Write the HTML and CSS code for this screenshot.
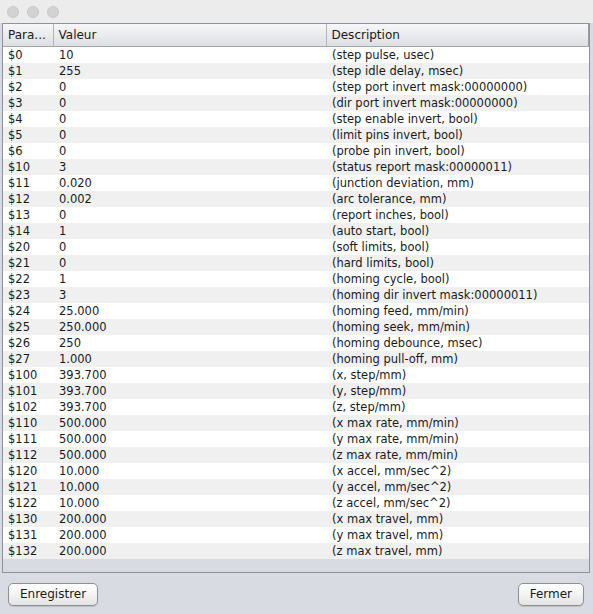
FILE: index.html
```html
<!DOCTYPE html>
<html lang="fr">
<head>
<meta charset="utf-8">
<title>Paramètres</title>
<link rel="stylesheet" href="styles.css">
</head>
<body>
<div class="window">
  <div class="titlebar">
    <span class="light"></span><span class="light"></span><span class="light"></span>
  </div>
  <div class="main">
    <div class="table-box">
      <table class="grid">
        <colgroup><col class="c1"><col class="c2"><col class="c3"></colgroup>
        <thead>
          <tr><th>Para...</th><th>Valeur</th><th>Description</th></tr>
        </thead>
        <tbody>
          <tr><td>$0</td><td>10</td><td>(step pulse, usec)</td></tr>
          <tr><td>$1</td><td>255</td><td>(step idle delay, msec)</td></tr>
          <tr><td>$2</td><td>0</td><td>(step port invert mask:00000000)</td></tr>
          <tr><td>$3</td><td>0</td><td>(dir port invert mask:00000000)</td></tr>
          <tr><td>$4</td><td>0</td><td>(step enable invert, bool)</td></tr>
          <tr><td>$5</td><td>0</td><td>(limit pins invert, bool)</td></tr>
          <tr><td>$6</td><td>0</td><td>(probe pin invert, bool)</td></tr>
          <tr><td>$10</td><td>3</td><td>(status report mask:00000011)</td></tr>
          <tr><td>$11</td><td>0.020</td><td>(junction deviation, mm)</td></tr>
          <tr><td>$12</td><td>0.002</td><td>(arc tolerance, mm)</td></tr>
          <tr><td>$13</td><td>0</td><td>(report inches, bool)</td></tr>
          <tr><td>$14</td><td>1</td><td>(auto start, bool)</td></tr>
          <tr><td>$20</td><td>0</td><td>(soft limits, bool)</td></tr>
          <tr><td>$21</td><td>0</td><td>(hard limits, bool)</td></tr>
          <tr><td>$22</td><td>1</td><td>(homing cycle, bool)</td></tr>
          <tr><td>$23</td><td>3</td><td>(homing dir invert mask:00000011)</td></tr>
          <tr><td>$24</td><td>25.000</td><td>(homing feed, mm/min)</td></tr>
          <tr><td>$25</td><td>250.000</td><td>(homing seek, mm/min)</td></tr>
          <tr><td>$26</td><td>250</td><td>(homing debounce, msec)</td></tr>
          <tr><td>$27</td><td>1.000</td><td>(homing pull-off, mm)</td></tr>
          <tr><td>$100</td><td>393.700</td><td>(x, step/mm)</td></tr>
          <tr><td>$101</td><td>393.700</td><td>(y, step/mm)</td></tr>
          <tr><td>$102</td><td>393.700</td><td>(z, step/mm)</td></tr>
          <tr><td>$110</td><td>500.000</td><td>(x max rate, mm/min)</td></tr>
          <tr><td>$111</td><td>500.000</td><td>(y max rate, mm/min)</td></tr>
          <tr><td>$112</td><td>500.000</td><td>(z max rate, mm/min)</td></tr>
          <tr><td>$120</td><td>10.000</td><td>(x accel, mm/sec^2)</td></tr>
          <tr><td>$121</td><td>10.000</td><td>(y accel, mm/sec^2)</td></tr>
          <tr><td>$122</td><td>10.000</td><td>(z accel, mm/sec^2)</td></tr>
          <tr><td>$130</td><td>200.000</td><td>(x max travel, mm)</td></tr>
          <tr><td>$131</td><td>200.000</td><td>(y max travel, mm)</td></tr>
          <tr><td>$132</td><td>200.000</td><td>(z max travel, mm)</td></tr>
        </tbody>
      </table>
    </div>
    <div class="actions">
      <button class="btn" type="button">Enregistrer</button>
      <button class="btn" type="button">Fermer</button>
    </div>
  </div>
</div>
</body>
</html>
```

FILE: styles.css
```css
* { box-sizing: border-box; }

html, body {
  margin: 0;
  padding: 0;
  width: 593px;
  height: 614px;
  overflow: hidden;
  background: #d8dbe1;
  font-family: "DejaVu Sans", Verdana, sans-serif;
  font-size: 11.5px;
  color: #1a1a1a;
}

.window {
  display: flex;
  flex-direction: column;
  height: 614px;
}

.titlebar {
  height: 23px;
  flex: none;
  background: #ececec;
  display: flex;
  align-items: center;
  gap: 8px;
  padding: 1px 0 0 7px;
}

.light {
  width: 12px;
  height: 12px;
  border-radius: 50%;
  background: #d3d3d3;
  border: 1px solid #c8c8c8;
}

.main {
  flex: 1;
  display: flex;
  flex-direction: column;
  padding: 0 3px 0 2px;
}

.table-box {
  height: 550px;
  border: 1px solid #8f9298;
  background: #d8dbe1;
  overflow: hidden;
}

.grid {
  width: 100%;
  border-collapse: collapse;
  table-layout: fixed;
}

.c1 { width: 50px; }
.c2 { width: 273px; }

.grid th {
  height: 22px;
  padding: 0 0 0 5px;
  text-align: left;
  font-weight: normal;
  font-size: 12px;
  background: linear-gradient(#f6f7f8, #e9eaec 55%, #dcdee2);
  border-bottom: 1px solid #a3a5aa;
  border-right: 1px solid #b1b3b8;
  white-space: nowrap;
  overflow: hidden;
}

.grid th:last-child { border-right: 1px solid #9c9ea3; }

.grid td {
  height: 16px;
  padding: 1px 0 0 5px;
  line-height: 15px;
  white-space: nowrap;
  overflow: hidden;
  background: #ffffff;
}

.grid tbody tr:nth-child(even) td { background: #f0f0f0; }

.grid td:nth-child(2),
.grid td:nth-child(3) { padding-left: 6px; }
.grid th:nth-child(2),
.grid th:nth-child(3) { padding-left: 5px; }

.actions {
  flex: 1;
  display: flex;
  justify-content: space-between;
  align-items: center;
  padding: 1px 6px 0 6px;
}

.btn {
  height: 23px;
  padding: 0 11px;
  font-family: "DejaVu Sans", Verdana, sans-serif;
  font-size: 12px;
  color: #1a1a1a;
  border: 1px solid #8d8f94;
  border-radius: 5px;
  background: linear-gradient(#ffffff, #f3f3f3 50%, #e4e4e4);
  box-shadow: 0 1px 1px rgba(0,0,0,0.12);
}
```
